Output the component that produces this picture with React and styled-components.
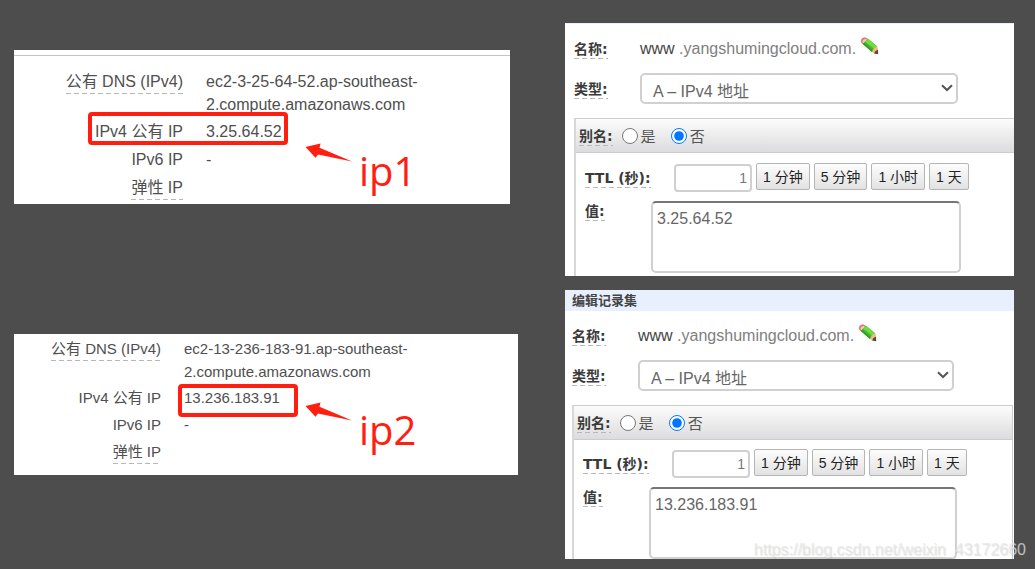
import React, { useId } from "react";
import styled, { createGlobalStyle } from "styled-components";

const GlobalStyle = createGlobalStyle`
  *, *::before, *::after { box-sizing: border-box; }
  body {
    margin: 0;
    background: #4d4d4d;
    color: #4f4f4f;
    font-family: "Liberation Sans", "Noto Sans CJK SC", sans-serif;
    font-size: 16px;
  }
`;

const Page = styled.main`
  position: relative;
  display: grid;
  grid-template-columns: minmax(0, 504fr) minmax(0, 449fr);
  column-gap: 47px;
  align-items: start;
  min-height: 100vh;
  padding: 0 21px 10px 14px;
`;

const Column = styled.div`
  display: flex;
  flex-direction: column;
  gap: ${(p) => p.$gap}px;
  padding-top: ${(p) => p.$top}px;
`;

/* Instance details */

const InfoPanel = styled.section`
  position: relative;
  background: #fff;
  font-size: ${(p) => p.$size}px;
  margin-right: ${(p) => (p.$ruled ? 8 : 0)}px;
  padding: ${(p) => (p.$ruled ? "5px 0 4px" : "0 0 11px")};
`;

const InfoList = styled.dl`
  display: flex;
  flex-direction: column;
  gap: ${(p) => (p.$ruled ? 4 : 3)}px;
  margin: 0;
  padding-top: ${(p) => (p.$ruled ? 14 : 3)}px;
  border-top: ${(p) => (p.$ruled ? "1px solid #c4c4c4" : "none")};
`;

const InfoRow = styled.div`
  position: relative;
  display: grid;
  grid-template-columns: ${(p) => p.$labelWidth}px 230px;
  column-gap: 23px;
  align-items: start;
`;

const dashes = `repeating-linear-gradient(to right, #b8b8b8 0 5px, transparent 5px 8px)`;

const InfoTerm = styled.dt`
  height: 24px;
  text-align: right;
  white-space: nowrap;
`;

const Term = styled.span`
  display: inline-block;
  height: 24px;
  line-height: 24px;
  background: ${(p) => (p.$hint ? `${dashes} left bottom / 100% 1px no-repeat` : "none")};
`;

const InfoValue = styled.dd`
  margin: 0;
  line-height: 23px;
`;

const Highlight = styled.span`
  position: absolute;
  top: ${(p) => (p.$wide ? -8 : -2)}px;
  bottom: ${(p) => (p.$wide ? -1 : -7)}px;
  left: ${(p) => (p.$wide ? 74 : 164)}px;
  width: ${(p) => (p.$wide ? 200 : 120)}px;
  border: 4px solid #ff1e10;
  border-radius: 4px;
`;

const Note = styled.div`
  position: absolute;
  left: 291px;
  top: ${(p) => p.$top}px;
  display: flex;
  gap: 6px;
  color: #ff1e10;
`;

const NoteText = styled.span`
  font: 40px/56px "Open Sans", sans-serif;
`;

function Arrow() {
  return (
    <svg width="48" height="20" viewBox="0 0 48 20" fill="currentColor" aria-hidden="true">
      <path d="M0.5 4 L15.5 0.5 L14.5 4.7 L47 18.4 L13 11.5 L10.5 14.8 Z" />
    </svg>
  );
}

function InstanceInfo({ ruled, labelWidth, dns, ip, note, noteTop, size }) {
  const rows = [
    { term: "公有 DNS (IPv4)", value: dns, hint: true },
    { term: "IPv4 公有 IP", value: ip, marked: true },
    { term: "IPv6 IP", value: "-" },
    { term: "弹性 IP", value: "", hint: true },
  ];
  return (
    <InfoPanel $ruled={ruled} $size={size}>
      <InfoList $ruled={ruled}>
        {rows.map((row) => (
          <InfoRow key={row.term} $labelWidth={labelWidth}>
            <InfoTerm>
              <Term $hint={row.hint}>{row.term}</Term>
            </InfoTerm>
            <InfoValue>
              {row.value}
              {row.marked && <Highlight $wide={ruled} />}
            </InfoValue>
          </InfoRow>
        ))}
      </InfoList>
      <Note $top={noteTop}>
        <Arrow />
        <NoteText>{note}</NoteText>
      </Note>
    </InfoPanel>
  );
}

/* Record set editor */

const RecordPanel = styled.form`
  overflow: hidden;
  background: #fff;
  border-top: ${(p) => (p.$titled ? "none" : "1px solid #e8f0ff")};
`;

const Title = styled.h2`
  margin: 0;
  padding-left: 7px;
  background: #e8f0fe;
  color: #444;
  font: bold 13px/21px "Noto Sans", "Noto Sans CJK SC", sans-serif;
`;

const Fields = styled.div`
  padding: ${(p) => (p.$titled ? "13px 0 0 7px" : "13px 0 0 9px")};
`;

const Field = styled.div`
  display: grid;
  grid-template-columns: 66px minmax(0, 1fr);
  align-items: center;
  margin-bottom: ${(p) => p.$after}px;
  padding-right: ${(p) => p.$end}px;
`;

const Caption = styled.span`
  justify-self: start;
  align-self: ${(p) => (p.$top ? "start" : "center")};
  background: ${dashes} left bottom / 100% 1px no-repeat;
  color: #3a3a3a;
  font: bold 14px/20px "DejaVu Sans", "Noto Sans CJK SC", sans-serif;
  white-space: nowrap;
`;

const NameLine = styled.div`
  display: flex;
  align-items: center;
  height: 24px;
  white-space: pre;
  color: #808080;
`;

const Host = styled.span`
  color: #444;
`;

const IconButton = styled.button`
  display: flex;
  align-self: flex-start;
  margin-left: 4px;
  padding: 0;
  border: 0;
  background: none;
`;

const SelectBox = styled.div`
  position: relative;
  display: flex;
`;

const Select = styled.select`
  appearance: none;
  width: 100%;
  height: 31px;
  padding: 5px 30px 0 11px;
  border: 2px solid #d0d0d0;
  border-radius: 5px;
  background: #fff;
  color: #666;
  font: inherit;
`;

const Chevron = styled.svg`
  position: absolute;
  right: 5px;
  top: 11px;
  pointer-events: none;
`;

const Group = styled.div`
  margin-right: ${(p) => (p.$closed ? 1 : 0)}px;
  border: 1px solid #ccc;
  border-left: 2px solid #d8d8d8;
  border-bottom: 0;
  border-right: ${(p) => (p.$closed ? "1px solid #ccc" : "none")};
`;

const AliasBar = styled.div`
  display: flex;
  align-items: center;
  height: 34px;
  padding-left: 3px;
  border-bottom: 1px solid #ccc;
  background: linear-gradient(#fcfcfc, #dcdcde);
`;

const Choice = styled.label`
  display: flex;
  align-items: center;
  gap: 3px;
  margin-left: ${(p) => (p.$first ? 9 : 15)}px;
  color: #555;
  font-size: 15px;
`;

const Radio = styled.input`
  width: 16px;
  height: 16px;
  margin: 0;
`;

const GroupBody = styled.div`
  display: flex;
  flex-direction: column;
  gap: 9px;
  padding: ${(p) => (p.$closed ? "9px 55px 0 9px" : "10px 53px 3px 9px")};
`;

const Line = styled.div`
  display: grid;
  grid-template-columns: ${(p) => p.$label}px minmax(0, 1fr);
  align-items: center;
`;

const TtlControls = styled.div`
  display: flex;
  align-items: flex-start;
  gap: 4px;
  height: 29px;
`;

const TtlInput = styled.input`
  width: 78px;
  height: 28px;
  margin-top: 1px;
  padding: 0 3px;
  border: 2px solid #d0d0d0;
  border-radius: 4px;
  color: #777;
  font: 14px "Liberation Sans", sans-serif;
  text-align: right;
`;

const Preset = styled.button`
  flex: none;
  height: 27px;
  padding: 0 6px 2px;
  border: 1px solid #b5b5b5;
  border-radius: 2px;
  background: linear-gradient(#fdfdfd, #e2e2e2);
  color: #222;
  font: 14px "Liberation Sans", "Noto Sans CJK SC", sans-serif;
`;

const ValueArea = styled.textarea`
  display: block;
  width: 100%;
  height: 72px;
  padding: 6px 4px;
  border: 2px solid #d0d0d0;
  border-top-color: #767676;
  border-radius: 5px;
  color: #666;
  font: 16px/20px "Liberation Sans", sans-serif;
  resize: none;
`;

function Pencil() {
  return (
    <svg width="20" height="20" viewBox="0 0 20 20" aria-hidden="true">
      <path d="M1.2 5 Q0.8 1 5.2 0.8 L8 2.2 L3.3 7.2 Z" fill="#e87870" stroke="#d8605c" strokeWidth="0.6" strokeLinejoin="round" />
      <path d="M2.5 5 Q2.6 2.4 5.6 2 L7.2 2.8 L3.8 6.2 Z" fill="#e2d2cf" />
      <path d="M2.8 7 L8 1.8 L17.2 9.2 L12 15 Z" fill="#45b82b" />
      <path d="M5.2 4.8 L8 2 L17 9.2 L14.7 11.9 Z" fill="#71dc42" />
      <path d="M2.8 7 L12 15 L13.2 13.7 L4 5.8 Z" fill="#329a25" />
      <path d="M12 15 L13.6 11.4 L17.2 9.2 L18.2 13 L18 17 L14.4 16.8 Z" fill="#f4b982" />
      <path d="M14.2 16.6 L15.4 14 L18 12.8 L18.2 17.2 Z" fill="#514a44" />
    </svg>
  );
}

function RecordSet({ title, value }) {
  const id = useId();
  const titled = Boolean(title);
  const presets = ["1 分钟", "5 分钟", "1 小时", "1 天"];
  return (
    <RecordPanel $titled={titled}>
      {title && <Title>{title}</Title>}
      <Fields $titled={titled}>
        <Field $after={12} $end={0}>
          <Caption>名称:</Caption>
          <NameLine>
            <Host>www </Host>
            .yangshumingcloud.com.
            <IconButton type="button" aria-label="编辑">
              <Pencil />
            </IconButton>
          </NameLine>
        </Field>
        <Field $after={14} $end={titled ? 60 : 56}>
          <Caption as="label" htmlFor={`${id}-type`}>类型:</Caption>
          <SelectBox>
            <Select id={`${id}-type`} defaultValue="A">
              <option value="A">A – IPv4 地址</option>
            </Select>
            <Chevron width="12" height="8" viewBox="0 0 12 8" fill="none" stroke="#555" strokeWidth="2">
              <path d="M1 1.2 L6 6 L11 1.2" />
            </Chevron>
          </SelectBox>
        </Field>
        <Group $closed={titled}>
          <AliasBar role="radiogroup" aria-label="别名">
            <Caption>别名:</Caption>
            <Choice $first>
              <Radio type="radio" name={`${id}-alias`} />是
            </Choice>
            <Choice>
              <Radio type="radio" name={`${id}-alias`} defaultChecked />否
            </Choice>
          </AliasBar>
          <GroupBody $closed={titled}>
            <Line $label={89}>
              <Caption as="label" htmlFor={`${id}-ttl`}>TTL (秒):</Caption>
              <TtlControls>
                <TtlInput id={`${id}-ttl`} type="text" defaultValue="1" />
                {presets.map((label) => (
                  <Preset key={label} type="button">{label}</Preset>
                ))}
              </TtlControls>
            </Line>
            <Line $label={66}>
              <Caption as="label" htmlFor={`${id}-value`} $top>值:</Caption>
              <ValueArea id={`${id}-value`} defaultValue={value} />
            </Line>
          </GroupBody>
        </Group>
      </Fields>
    </RecordPanel>
  );
}

const Watermark = styled.span`
  position: absolute;
  right: 9px;
  bottom: 10px;
  color: rgba(228, 228, 228, 0.75);
  font-size: 16px;
  line-height: 18px;
  text-shadow: 1px 1px 1px rgba(120, 120, 120, 0.2);
  pointer-events: none;
`;

export default function App() {
  return (
    <>
      <GlobalStyle />
      <Page>
        <Column $top={50} $gap={130}>
          <InstanceInfo
            ruled
            size={16}
            labelWidth={169}
            dns="ec2-3-25-64-52.ap-southeast-2.compute.amazonaws.com"
            ip="3.25.64.52"
            note="ip1"
            noteTop={93}
          />
          <InstanceInfo
            size={15}
            labelWidth={147}
            dns="ec2-13-236-183-91.ap-southeast-2.compute.amazonaws.com"
            ip="13.236.183.91"
            note="ip2"
            noteTop={68}
          />
        </Column>
        <Column $top={23} $gap={14}>
          <RecordSet value="3.25.64.52" />
          <RecordSet title="编辑记录集" value="13.236.183.91" />
        </Column>
        <Watermark>https://blog.csdn.net/weixin_43172660</Watermark>
      </Page>
    </>
  );
}
